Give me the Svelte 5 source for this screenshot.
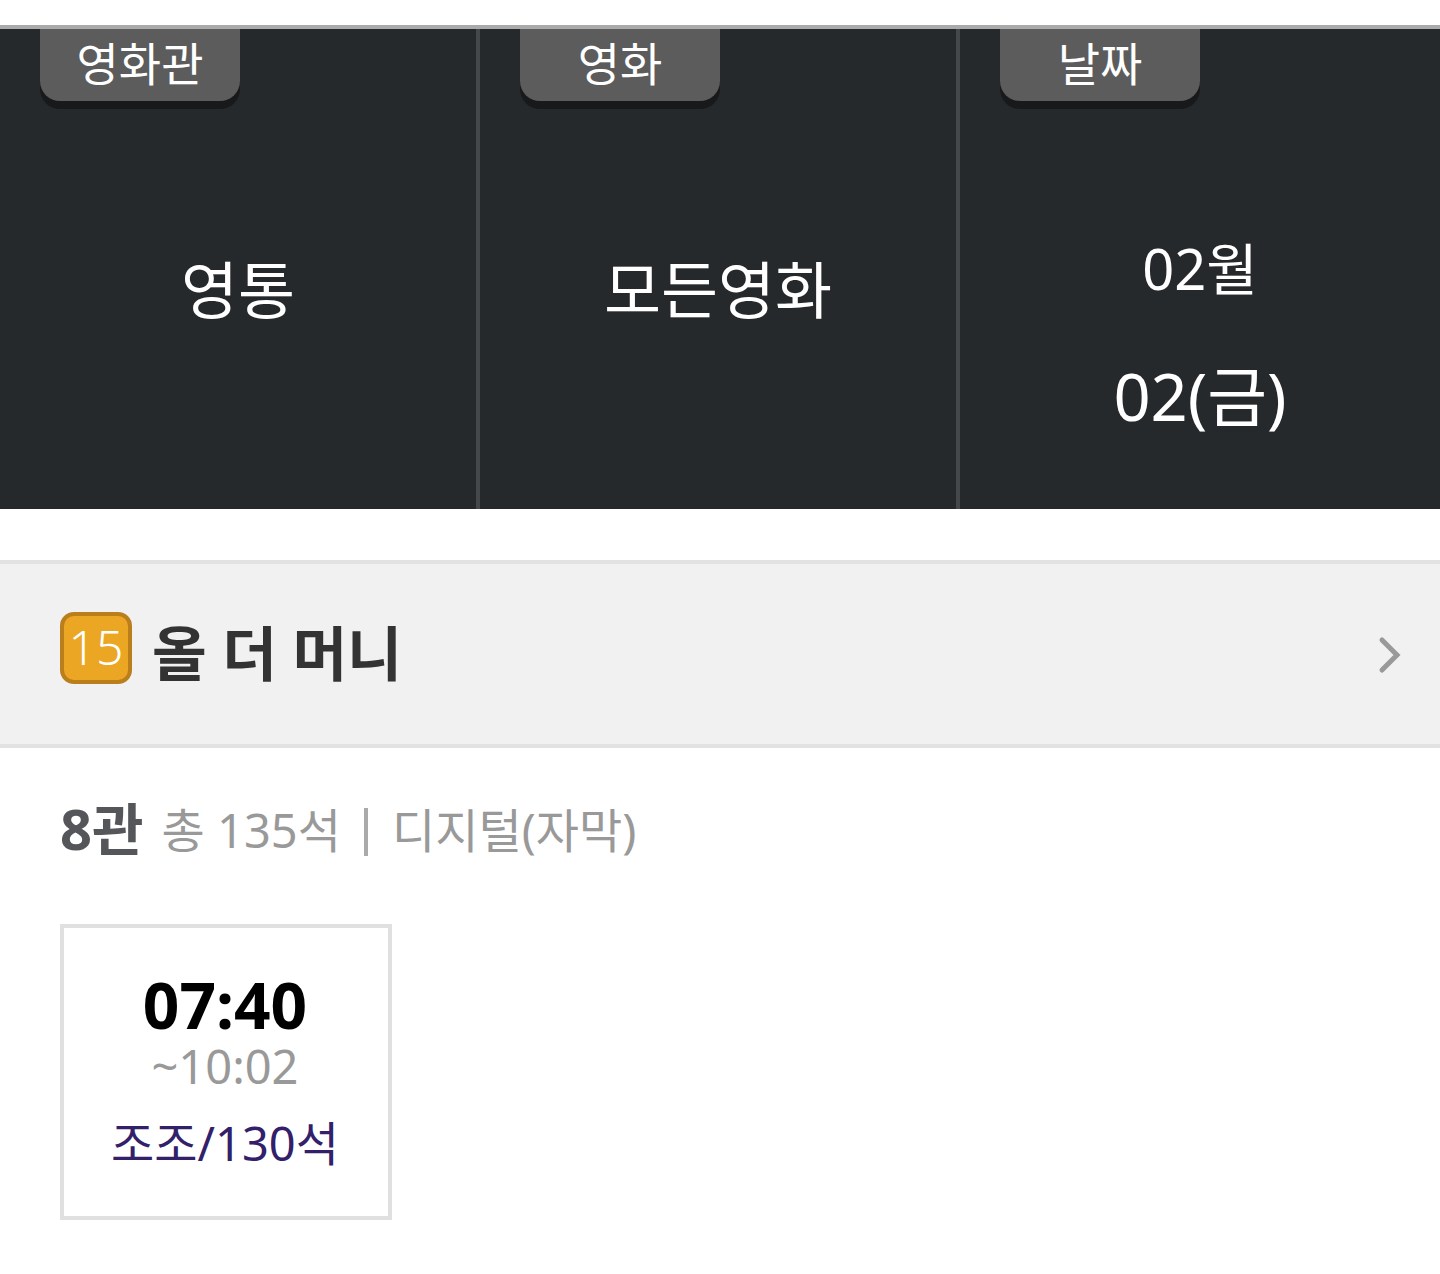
<script lang="ts">
  // Booking filter columns and the single showtime below them
  const filters = [
    { tab: "영화관", lines: ["영통"] },
    { tab: "영화", lines: ["모든영화"] },
    { tab: "날짜", lines: ["02월", "02(금)"] },
  ];
</script>

<div class="page">
  <div class="filters">
    {#each filters as f}
      <div class="col">
        <div class="tab">{f.tab}</div>
        <div class="value" class:multi={f.lines.length > 1}>
          {#each f.lines as line}
            <div>{line}</div>
          {/each}
        </div>
      </div>
    {/each}
  </div>

  <div class="movie">
    <span class="rating">15</span>
    <span class="title">올 더 머니</span>
    <svg class="chevron" width="24" height="40" viewBox="0 0 24 40" aria-hidden="true">
      <path d="M4 5 L19 20 L4 35" fill="none" stroke="#999" stroke-width="5" stroke-linecap="round" stroke-linejoin="miter" />
    </svg>
  </div>

  <div class="hall">
    <strong>8관</strong>
    <span class="seats">총 135석</span>
    <span class="sep"></span>
    <span class="seats">디지털(자막)</span>
  </div>

  <div class="times">
    <div class="time">
      <div class="start">07:40</div>
      <div class="end">~10:02</div>
      <div class="remain">조조/130석</div>
    </div>
  </div>
</div>

<style>
  :global(body) {
    margin: 0;
    background: #fff;
  }

  .page {
    height: 1274px;
    padding-top: 25px;
    box-sizing: border-box;
    overflow: hidden;
    font-family: "Noto Sans", "Noto Sans CJK KR", sans-serif;
  }

  .filters {
    display: grid;
    grid-template-columns: repeat(3, 1fr);
    height: 484px;
    box-sizing: border-box;
    border-top: 4px solid #aaa;
    background: #26292c;
  }

  .col {
    display: flex;
    flex-direction: column;
    border-right: 4px solid #45484a;
    box-sizing: border-box;
  }

  .col:last-child {
    border-right: 0;
  }

  .tab {
    width: 200px;
    height: 72px;
    margin-left: 40px;
    border-radius: 0 0 20px 20px;
    background: #5b5c5b;
    box-shadow: 0 8px 0 #18191b;
    color: #fff;
    font-size: 46px;
    line-height: 68px;
    text-align: center;
  }

  .value {
    flex: 1;
    display: flex;
    flex-direction: column;
    justify-content: center;
    color: #fff;
    font-size: 62px;
    line-height: 80px;
    text-align: center;
    padding-bottom: 30px;
  }

  .value.multi {
    padding: 0;
    gap: 48px;
    font-size: 56px;
    margin-top: 54px;
  }

  .value.multi div:last-child {
    font-size: 65px;
  }

  .movie {
    display: flex;
    align-items: center;
    height: 188px;
    margin-top: 51px;
    padding: 0 38px 0 60px;
    box-sizing: border-box;
    border-top: 4px solid #e2e2e2;
    border-bottom: 4px solid #e2e2e2;
    background: #f1f1f1;
  }

  .rating {
    width: 72px;
    height: 72px;
    box-sizing: border-box;
    margin-top: -12px;
    border: 4px solid #ba7f1c;
    border-radius: 14px;
    background: #eba723;
    color: #fff;
    font-size: 48px;
    line-height: 62px;
    text-align: center;
    font-weight: 300;
  }

  .title {
    flex: 1;
    margin-left: 20px;
    color: #333;
    font-size: 59.5px;
    font-weight: 700;
    line-height: 80px;
    margin-top: -2px;
  }

  .chevron {
    margin-top: 2px;
  }

  .hall {
    display: flex;
    align-items: center;
    height: 60px;
    margin: 50px 0 0 60px;
    color: #999;
    font-size: 47px;
    line-height: 60px;
  }

  .hall strong {
    margin-right: 18px;
    color: #54565a;
    font-size: 56px;
  }

  .seats {
    padding-top: 4px;
  }

  .sep {
    width: 4px;
    height: 48px;
    margin: 8px 24px 0 23px;
    background: #aaa;
  }

  .times {
    margin: 66px 0 0 60px;
  }

  .time {
    width: 332px;
    height: 296px;
    box-sizing: border-box;
    padding-top: 39px;
    border: 4px solid #e0e0e0;
    text-align: center;
  }

  .start {
    color: #000;
    font-size: 64px;
    font-weight: 700;
    line-height: 76px;
    margin-left: -2px;
  }

  .end {
    color: #999;
    font-size: 47px;
    line-height: 46px;
    margin: 0 0 0 -2px;
  }

  .remain {
    color: #32206a;
    font-size: 47px;
    line-height: 60px;
    margin: 24px 0 0 -2px;
  }
</style>
